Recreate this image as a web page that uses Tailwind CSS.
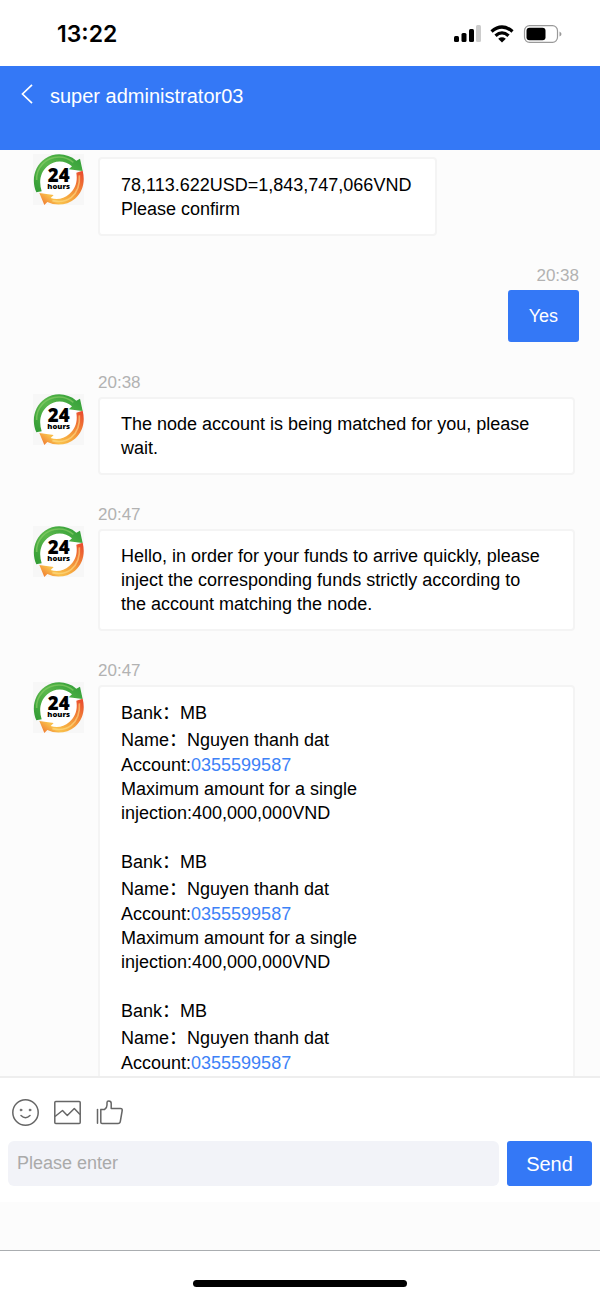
<!DOCTYPE html>
<html lang="en">
<head>
    <meta charset="UTF-8">
    <meta name="viewport" content="width=device-width, initial-scale=1.0">
    <title>super administrator03</title>
    <script src="https://cdn.jsdelivr.net/npm/@tailwindcss/browser@4"></script>
</head>
<body class="h-screen flex flex-col overflow-hidden bg-white text-black text-[18px] leading-6 font-['Liberation_Sans','Noto_Sans_CJK_SC',sans-serif]">
    <!-- Shared avatar arrows -->
    <svg class="absolute w-0 h-0" aria-hidden="true">
        <defs>
            <linearGradient id="green" x1="0" y1="1" x2="1" y2="0">
                <stop offset="0" stop-color="#2f9a33"/>
                <stop offset=".5" stop-color="#5cb84c"/>
                <stop offset="1" stop-color="#2c9b35"/>
            </linearGradient>
            <linearGradient id="orange" x1="1" y1="0" x2="0" y2="1">
                <stop offset="0" stop-color="#e8452c"/>
                <stop offset=".5" stop-color="#f5a03c"/>
                <stop offset=".75" stop-color="#f9c04c"/>
                <stop offset="1" stop-color="#ee6a2a"/>
            </linearGradient>
        </defs>
        <symbol id="avatar" viewBox="0 0 153 153">
            <rect width="153" height="153" fill="#f7f7f7"/>
            <circle cx="76" cy="77" r="62" fill="#fff"/>
            <path d="M10 115C-6 78 4 36 36 14C66-6 104-2 130 20L141 14L149 51L107 46L117 37C96 18 64 18 43 37C21 56 17 84 26 112Z" fill="url(#green)"/>
            <path d="M11 78C9 42 38 9 78 9C95 9 109 15 121 25" fill="none" stroke="#8fd06a" stroke-width="5" opacity=".6"/>
            <path d="M130 56L149 50C157 82 150 114 126 134C104 153 70 157 43 144L34 153L19 117L62 123L53 132C72 139 92 135 109 120C128 104 134 82 130 56Z" fill="url(#orange)"/>
            <path d="M139 64C141 92 134 114 115 130C98 143 78 145 58 140" fill="none" stroke="#fde08a" stroke-width="5" opacity=".6"/>
        </symbol>
    </svg>

    <!-- Status bar -->
    <div class="h-[66px] shrink-0 flex items-center justify-between pl-[57px] pr-[38px] pt-px">
        <span class="font-['Inter'] font-semibold text-[23px]">13:22</span>
        <div class="flex items-center gap-[9px]">
            <svg class="w-[27px] h-[18px]" viewBox="0 0 27 18">
                <rect x="0" y="11" width="5" height="6" rx="1.5"/>
                <rect x="7.5" y="8" width="5" height="9" rx="1.5"/>
                <rect x="15" y="4" width="5" height="13" rx="1.5"/>
                <rect x="22" y="0" width="5" height="17" rx="1.5" fill="#ccc"/>
            </svg>
            <svg class="w-[24px] h-[18px]" viewBox="0 0 24 18" fill="none" stroke="#000" stroke-width="3.3">
                <path d="M1.5 6.5Q12-2.5 22.5 6.5"/>
                <path d="M5.5 10.7Q12 5 18.5 10.7"/>
                <path d="M12 17.5L8.2 13.7Q12 10.8 15.8 13.7Z" fill="#000" stroke="none"/>
            </svg>
            <svg class="w-[39px] h-[18px]" viewBox="0 0 39 18">
                <rect x="1.5" y=".7" width="33" height="16.6" rx="5" fill="none" stroke="#999" stroke-width="1.2"/>
                <rect x="3.5" y="2.7" width="19" height="12.6" rx="3"/>
                <path d="M36.5 6.5Q38.5 7.5 38.5 9T36.5 11.5Z" fill="#999"/>
            </svg>
        </div>
    </div>

    <!-- Header -->
    <header class="shrink-0 bg-[#3478f6] pb-6 text-white">
        <div class="h-[60px] flex items-center pl-5">
            <button type="button" aria-label="Back" class="w-[30px] pb-1">
                <svg class="w-[14px] h-[20px]" viewBox="0 0 14 20" fill="none" stroke="#fff" stroke-width="1.7">
                    <path d="M12 .8L2.5 10L12 19.2"/>
                </svg>
            </button>
            <h1 class="text-[20px]">super administrator03</h1>
        </div>
    </header>

    <!-- Messages -->
    <main class="flex-1 min-h-0 overflow-hidden bg-[#fcfcfc] pt-[7px] pl-[33px] pr-[25px] flex flex-col gap-[30px]">
        <div class="flex gap-[14px]">
            <svg class="w-[51px] h-[51px] shrink-0 -mt-[3px]" viewBox="0 0 153 153">
                <use href="#avatar"/>
                <text x="77" y="84" text-anchor="middle" class="font-['Open_Sans'] font-extrabold text-[56px]">24</text>
                <text x="77" y="106" text-anchor="middle" class="font-['Open_Sans'] font-extrabold text-[23px]">hours</text>
            </svg>
            <div class="bg-white border-2 border-[#f4f4f4] rounded-[4px] pl-[21px] pr-6 pt-[14px] pb-[13px]">
                78,113.622USD=1,843,747,066VND<br>Please confirm
            </div>
        </div>

        <div class="flex flex-col items-end -mr-1">
            <time class="text-[17px] leading-5 text-[#b2b2b2] mb-1">20:38</time>
            <div class="bg-[#3478f6] text-white rounded-[3px] px-[21px] py-[14px]">Yes</div>
        </div>

        <div>
            <time class="block text-[17px] leading-5 text-[#b2b2b2] mt-px mb-1 pl-[65px]">20:38</time>
            <div class="flex gap-[14px]">
                <svg class="w-[51px] h-[51px] shrink-0 -mt-[3px]" viewBox="0 0 153 153">
                    <use href="#avatar"/>
                    <text x="77" y="84" text-anchor="middle" class="font-['Open_Sans'] font-extrabold text-[56px]">24</text>
                    <text x="77" y="106" text-anchor="middle" class="font-['Open_Sans'] font-extrabold text-[23px]">hours</text>
                </svg>
                <div class="flex-1 bg-white border-2 border-[#f4f4f4] rounded-[4px] pl-[21px] pr-6 pt-[13px] pb-[13px]">
                    The node account is being matched for you, please wait.
                </div>
            </div>
        </div>

        <div>
            <time class="block text-[17px] leading-5 text-[#b2b2b2] mb-1 pl-[65px]">20:47</time>
            <div class="flex gap-[14px]">
                <svg class="w-[51px] h-[51px] shrink-0 -mt-[3px]" viewBox="0 0 153 153">
                    <use href="#avatar"/>
                    <text x="77" y="84" text-anchor="middle" class="font-['Open_Sans'] font-extrabold text-[56px]">24</text>
                    <text x="77" y="106" text-anchor="middle" class="font-['Open_Sans'] font-extrabold text-[23px]">hours</text>
                </svg>
                <div class="flex-1 bg-white border-2 border-[#f4f4f4] rounded-[4px] pl-[21px] pr-6 pt-[13px] pb-[13px]">
                    Hello, in order for your funds to arrive quickly, please inject the corresponding funds strictly according to the account matching the node.
                </div>
            </div>
        </div>

        <div>
            <time class="block text-[17px] leading-5 text-[#b2b2b2] mb-1 pl-[65px]">20:47</time>
            <div class="flex gap-[14px]">
                <svg class="w-[51px] h-[51px] shrink-0 -mt-[3px]" viewBox="0 0 153 153">
                    <use href="#avatar"/>
                    <text x="77" y="84" text-anchor="middle" class="font-['Open_Sans'] font-extrabold text-[56px]">24</text>
                    <text x="77" y="106" text-anchor="middle" class="font-['Open_Sans'] font-extrabold text-[23px]">hours</text>
                </svg>
                <div class="flex-1 bg-white border-2 border-[#f4f4f4] rounded-[4px] pl-[21px] pr-6 pt-[13px] pb-[13px] flex flex-col gap-6">
                    <div>
                        <p class="leading-[27px]">Bank：MB</p>
                        <p class="leading-[26px]">Name：Nguyen thanh dat</p>
                        <p>Account:<a href="tel:0355599587" class="text-[#3d82f7]">0355599587</a></p>
                        <p>Maximum amount for a single<br>injection:400,000,000VND</p>
                    </div>
                    <div>
                        <p class="leading-[27px]">Bank：MB</p>
                        <p class="leading-[26px]">Name：Nguyen thanh dat</p>
                        <p>Account:<a href="tel:0355599587" class="text-[#3d82f7]">0355599587</a></p>
                        <p>Maximum amount for a single<br>injection:400,000,000VND</p>
                    </div>
                    <div>
                        <p class="leading-[27px]">Bank：MB</p>
                        <p class="leading-[26px]">Name：Nguyen thanh dat</p>
                        <p>Account:<a href="tel:0355599587" class="text-[#3d82f7]">0355599587</a></p>
                    </div>
                </div>
            </div>
        </div>
    </main>

    <!-- Input area -->
    <footer class="shrink-0">
        <form class="border-t-2 border-[#eee] px-[8px] pb-4" onsubmit="return false">
            <div class="flex gap-[15px] pt-[21px] pb-[15px] pl-1">
                <button type="button" aria-label="Emoji">
                    <svg class="w-[27px] h-[27px]" viewBox="0 0 27 27" fill="none" stroke="#666" stroke-width="1.5" stroke-linecap="round">
                        <circle cx="13.5" cy="13.5" r="12.7"/>
                        <path d="M9 16.5Q13.5 21 18 16.5"/>
                        <circle cx="9" cy="11" r="1" fill="#666" stroke-width=".6"/>
                        <circle cx="18" cy="11" r="1" fill="#666" stroke-width=".6"/>
                    </svg>
                </button>
                <button type="button" aria-label="Image">
                    <svg class="w-[27px] h-[27px]" viewBox="0 0 27 27" fill="none" stroke="#666" stroke-width="1.5" stroke-linejoin="round">
                        <rect x=".8" y="2.5" width="25.4" height="22" rx="1"/>
                        <path d="M1 17.5L8.5 11.5L13.3 16.5L20.3 9.5L26 15.5"/>
                    </svg>
                </button>
                <button type="button" aria-label="Like">
                    <svg class="w-[27px] h-[27px]" viewBox="0 0 27 27" fill="none" stroke="#666" stroke-width="1.5" stroke-linejoin="round" stroke-linecap="round">
                        <path d="M1.5 10.5V24.3"/>
                        <path d="M5 10.5H8.5Q11 9 11 6V3.5Q11 2 12.7 2Q15.2 2 15.2 4.5V9.5H24.5Q26.5 9.5 26.2 11.5L24.3 22.5Q24 24.5 22 24.5H6Q4.8 24.5 4.8 23.3V10.5"/>
                    </svg>
                </button>
            </div>
            <div class="flex gap-2">
                <input type="text" id="message" aria-label="Message" placeholder="Please enter" class="flex-1 min-w-0 h-[45px] px-[9px] rounded-[6px] bg-[#f2f3f8] placeholder:text-[#aaa] outline-none">
                <button type="submit" class="w-[85px] h-[45px] rounded-[3px] bg-[#3478f6] text-white text-[20px]">Send</button>
            </div>
        </form>
        <div class="h-[49px] bg-[#fcfcfc] border-b border-[#aaadb0]"></div>
        <div class="h-[47px] flex justify-center items-end pb-[11px]">
            <div class="w-[214px] h-[7px] rounded-full bg-black"></div>
        </div>
    </footer>
</body>
</html>
